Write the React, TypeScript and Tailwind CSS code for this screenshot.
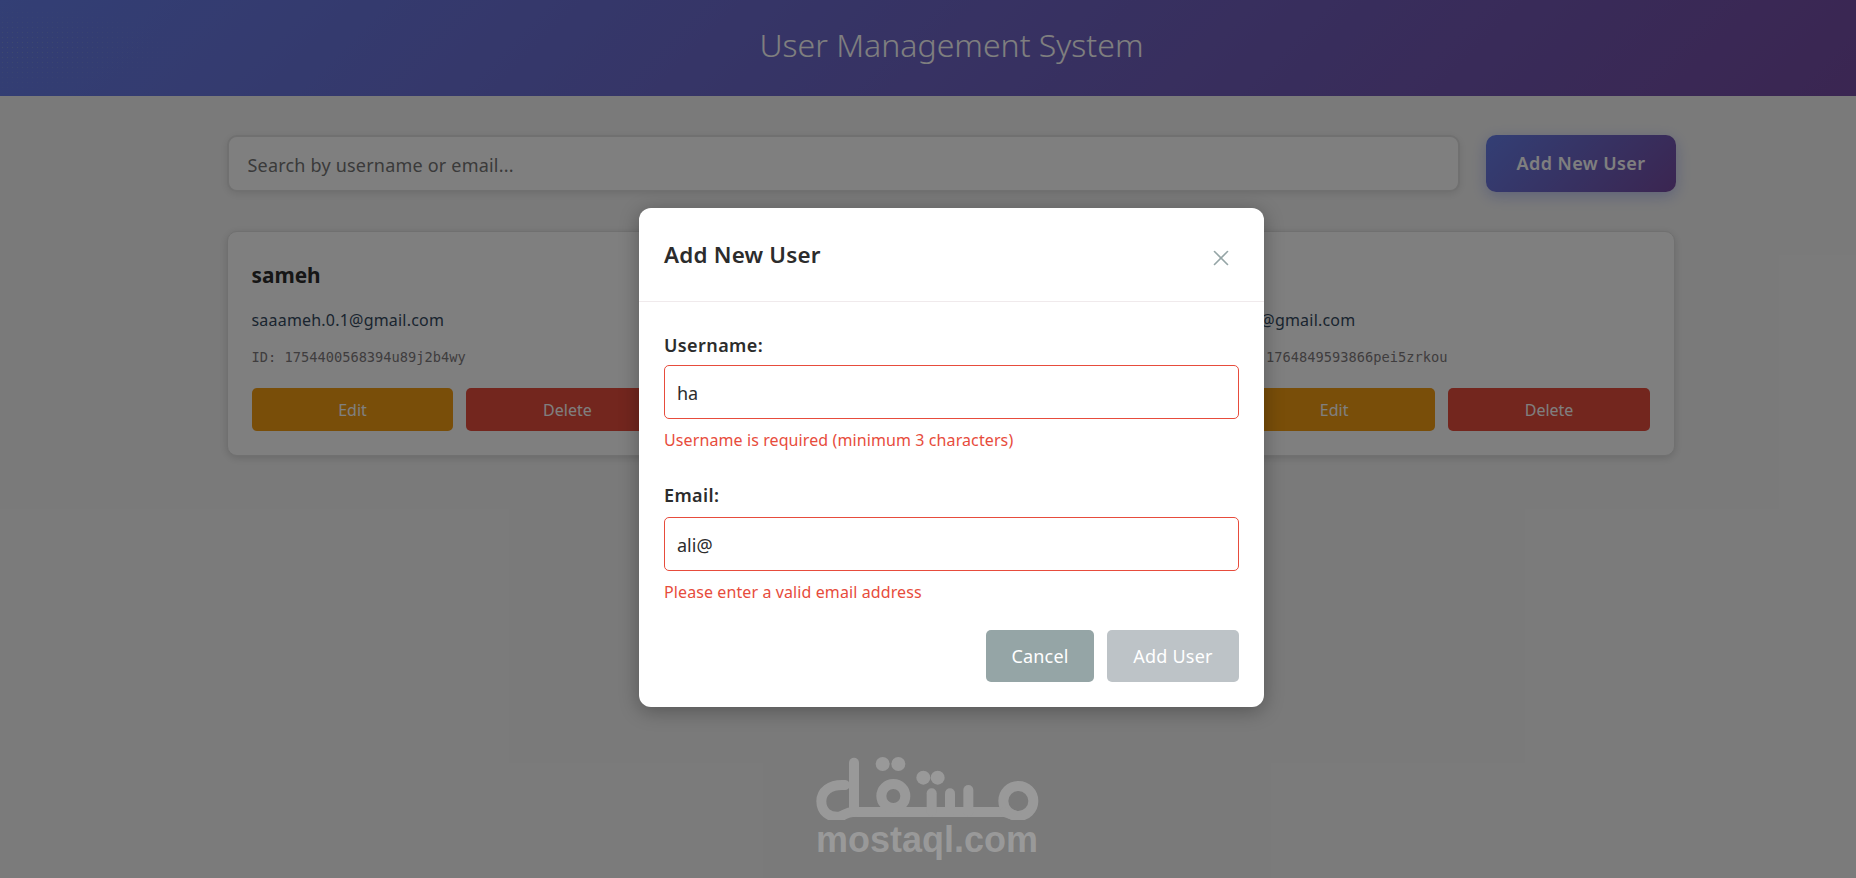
import { X } from "lucide-react"

const font = { fontFamily: '"Noto Sans", sans-serif' }

const cardBox = "flex-1 bg-white rounded-[10px] border border-[#e0e0e0] shadow-[0_2px_8px_rgba(0,0,0,0.15)] px-6 pt-6 pb-6 h-[225px]"

function UserCard({ name, email, id }: { name: string, email: string, id: string }) {
    return (
        <article className={cardBox}>
            <h3 className="text-[20.8px] leading-[38px] font-bold text-[#2c2c2c] h-[38px]">{name}</h3>
            <p className="mt-[14px] text-[16px] leading-6 h-6 text-[#34495e] tracking-[0.2px]">{email}</p>
            <p className="mt-[15px] text-[13.7px] leading-5 h-5 text-[#7f7a7d] font-['DejaVu_Sans_Mono',monospace]">{id}</p>
            <div className="mt-[21px] flex gap-[13px]">
                <button className="flex-1 h-[43px] rounded-[5px] bg-[#f39c12] text-white text-[16px]">Edit</button>
                <button className="flex-1 h-[43px] rounded-[5px] bg-[#e74c3c] text-white text-[16px]">Delete</button>
            </div>
        </article>
    )
}

function Field({ label, value, error, wide }: { label: string, value: string, error: string, wide?: boolean }) {
    return (
        <div>
            <label className="block text-[18px] leading-6 font-semibold text-[#2c2c2c] tracking-[0.4px]">{label}</label>
            <input
                type="text"
                readOnly
                value={value}
                className={`block w-full h-[54px] px-[12px] pt-[2px] rounded-[5px] border border-[#e74c3c] text-[18px] text-[#2c2c2c] outline-none ${wide ? "mt-[10px]" : "mt-2"}`}
            />
            <p className="mt-[10px] text-[16px] leading-[22px] text-[#e74c3c] tracking-[0.1px]">{error}</p>
        </div>
    )
}

function MostaqlLogo() {
    return (
        <div className="absolute left-[815px] top-[755px] w-[224px] flex flex-col items-center">
            <svg width="224" height="65" viewBox="75 45 672 195" fill="none" stroke="#999999" strokeWidth="30" strokeLinecap="round" strokeLinejoin="round">
                <path d="M165 135 C118 132 94 155 94 184 C94 216 118 232 146 230 C160 229 168 216 190 216 L650 216" />
                <path d="M192 68 L192 216" />
                <circle cx="310" cy="168" r="36" />
                <path d="M425 160 L425 214" />
                <path d="M480 160 L480 214" />
                <path d="M535 150 L535 214" />
                <circle cx="685" cy="183" r="45" />
                <path d="M645 216 L682 230" />
                <g fill="#999999" stroke="none">
                    <circle cx="278" cy="72" r="21" />
                    <circle cx="325" cy="72" r="21" />
                    <circle cx="400" cy="113" r="21" />
                    <circle cx="443" cy="113" r="21" />
                </g>
            </svg>
            <span className="text-[36px] leading-[40px] font-bold text-[#999999] font-['Liberation_Sans',sans-serif] whitespace-nowrap">mostaql.com</span>
        </div>
    )
}

export default function App() {
    return (
        <div className="relative w-[1856px] h-[878px] overflow-hidden" style={font}>
            <div className="relative w-[1903px] h-[915px] bg-[#f5f5f5]">
                <header className="relative h-24 pb-[7px] flex items-center justify-center bg-[linear-gradient(135deg,#667eea,#764ba2)]">
                    {/* faint dotted noise in the top left corner */}
                    <div className="absolute left-0 top-0 w-[190px] h-24 opacity-50 bg-[radial-gradient(#9fb8c8_0.6px,transparent_0.9px)] bg-[length:5px_5px] [mask-image:radial-gradient(ellipse_at_left,black,transparent_70%)]" />
                    <h1 className="text-[32px] font-light text-white">User Management System</h1>
                </header>

                <main className="w-[1449.5px] ml-[226.5px] pt-[39px]">
                    <div className="flex gap-[26px]">
                        <input
                            type="text"
                            placeholder="Search by username or email..."
                            className="flex-1 h-[57px] px-[19px] pt-[2px] rounded-[10px] bg-white border-2 border-[#e0e0e0] shadow-[0_2px_8px_rgba(0,0,0,0.1)] text-[18px] tracking-[0.2px] placeholder:text-[#757575] outline-none"
                        />
                        <button className="w-[190px] h-[57px] rounded-[10px] bg-[linear-gradient(135deg,#667eea,#764ba2)] text-white text-[18px] font-semibold tracking-[0.4px] shadow-[0_4px_15px_rgba(102,126,234,0.4)]">Add New User</button>
                    </div>

                    <div className="mt-[39px] pr-[1px] flex gap-6">
                        <UserCard name="sameh" email="saaameh.0.1@gmail.com" id="ID: 1754400568394u89j2b4wy" />
                        {/* this one sits fully behind the modal */}
                        <article className={cardBox} />
                        <UserCard name="ali" email="ali1@gmail.com" id="ID: 1764849593866pei5zrkou" />
                    </div>
                </main>

                <div className="absolute inset-0 bg-black/50 flex items-center justify-center">
                    <section className="w-[625px] h-[499px] bg-white rounded-[12px] shadow-[0_4px_20px_rgba(0,0,0,0.3)]">
                        <div className="h-[94px] px-[25px] flex items-center justify-between border-b border-[#f0eaec]">
                            <h2 className="text-[22.4px] font-semibold text-[#2c2c2c] tracking-[0.2px]">Add New User</h2>
                            <button className="mr-[5px] mt-[6px] text-[#95a5a6]"><X size={26} strokeWidth={1.5} /></button>
                        </div>

                        <div className="px-[25px] pt-[31px]">
                            <Field label="Username:" value="ha" error="Username is required (minimum 3 characters)" />
                            <div className="mt-8">
                                <Field label="Email:" value="ali@" error="Please enter a valid email address" wide />
                            </div>
                            <div className="mt-[27px] flex justify-end gap-[13px]">
                                <button className="w-[108px] h-[52px] rounded-[5px] bg-[#95a5a6] text-white text-[18px] tracking-[0.2px]">Cancel</button>
                                <button className="w-[132px] h-[52px] rounded-[5px] bg-[#bdc3c7] text-white text-[18px] tracking-[0.2px]">Add User</button>
                            </div>
                        </div>
                    </section>
                </div>

                <MostaqlLogo />
            </div>
        </div>
    )
}
